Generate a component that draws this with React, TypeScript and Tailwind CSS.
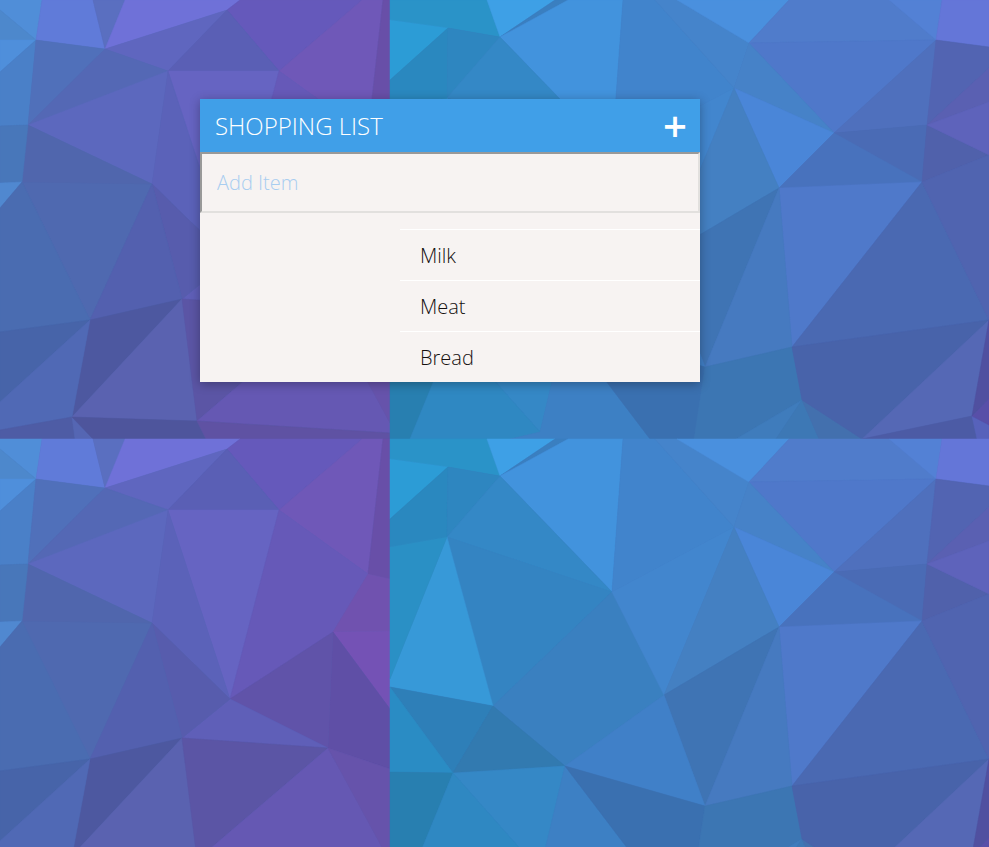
const polys: [string, string][] = [
  // left part of the wallpaper
  ['0,0 42,0 36,40 0,10', '#508ed8'],
  ['0,10 36,40 0,40', '#4d88cc'],
  ['0,40 36,40 0,72', '#4f8fdb'],
  ['0,72 36,40 28,125 0,126', '#4a80c8'],
  ['42,0 93,0 105,49 36,40', '#607bd9'],
  ['93,0 125,0 105,49', '#5a6fc0'],
  ['125,0 240,0 227,10 105,49', '#6f71d8'],
  ['227,10 240,0 362,0 279,71', '#6559bb'],
  ['279,71 362,0 383,0 368,135', '#6f58b8'],
  ['383,0 390,0 390,140 368,135', '#684fa8'],
  ['105,49 227,10 168,71', '#5f66bf'],
  ['227,10 279,71 168,71', '#5a5fb5'],
  ['36,40 105,49 28,125', '#5070ba'],
  ['105,49 168,71 28,125', '#5468b5'],
  ['28,125 168,71 152,184', '#5c68be'],
  ['168,71 279,71 230,260', '#6664c2'],
  ['168,71 230,260 152,184', '#5b62b9'],
  ['279,71 368,135 333,193 230,260', '#6659b8'],
  ['368,135 390,140 390,192 333,193', '#7052af'],
  ['333,193 390,192 390,270', '#7452b5'],
  ['333,193 390,270 390,330 328,309', '#5f4fa6'],
  ['230,260 333,193 328,309', '#6053a9'],
  ['230,260 328,309 182,299', '#5f5fb8'],
  ['152,184 230,260 182,299', '#575cad'],
  ['22,182 152,184 90,320', '#4f69b0'],
  ['152,184 182,299 90,320', '#5360af'],
  ['28,125 152,184 22,182', '#5066ad'],
  ['0,126 28,125 22,182 0,183', '#4877ba'],
  ['0,183 22,182 0,208', '#5088d0'],
  ['0,208 22,182 90,320 0,332', '#4a6cb1'],
  ['0,332 90,320 0,402', '#4764a9'],
  ['90,320 182,299 72,417', '#4d58a0'],
  ['72,417 182,299 197,421', '#5a62b0'],
  ['182,299 328,309 197,421', '#5b55a5'],
  ['197,421 328,309 390,423 390,433', '#6558b3'],
  ['328,309 390,330 390,423', '#6653ab'],
  ['0,402 90,320 72,417 0,430', '#5069b5'],
  ['0,430 72,417 75,439 0,439', '#4e5ca5'],
  ['72,417 93,439 75,439', '#5566b3'],
  ['72,417 197,421 206,439 93,439', '#4e559c'],
  ['197,421 390,433 390,439 206,439', '#5f52a3'],
  // right part
  ['390,0 487,0 500,37 448,28 390,20', '#2a93c8'],
  ['487,0 555,0 500,37', '#3ea0e6'],
  ['555,0 568,0 500,37', '#3a7fc0'],
  ['568,0 623,0 612,153 500,37', '#4293dd'],
  ['390,20 448,28 390,80', '#2c9cd6'],
  ['390,80 448,28 447,98 390,108', '#2a88bf'],
  ['448,28 500,37 447,98', '#2e86c0'],
  ['447,98 500,37 612,153', '#3488c6'],
  ['447,98 612,153 493,267', '#3484c2'],
  ['612,153 664,256 565,327 493,267', '#3a80c0'],
  ['447,98 493,267 390,248 390,240', '#3799d8'],
  ['390,108 447,98 390,240', '#2a90c5'],
  ['390,248 493,267 453,334', '#2e7fb8'],
  ['493,267 565,327 453,334', '#327ab0'],
  ['390,248 453,334 390,333', '#2a8cc4'],
  ['390,333 453,334 410,439 390,439', '#287fb0'],
  ['453,334 565,327 540,432', '#3588c6'],
  ['453,334 540,432 510,439 410,439', '#2f88c2'],
  ['565,327 650,439 510,439 540,432', '#3d80c4'],
  ['623,0 655,0 734,88 612,153', '#4184cc'],
  ['612,153 734,88 664,256', '#4286ce'],
  ['655,0 677,0 749,43 734,88', '#4584cb'],
  ['677,0 789,0 749,43', '#4a90de'],
  ['749,43 789,0 889,0 936,40', '#507ccb'],
  ['889,0 942,0 936,40', '#5381d5'],
  ['942,0 989,0 989,47 936,40', '#6476d8'],
  ['749,43 936,40 834,133', '#4f78ca'],
  ['734,88 749,43 834,133', '#4682c8'],
  ['734,88 834,133 779,188', '#4a86d8'],
  ['834,133 936,40 927,125', '#4f70bd'],
  ['834,133 927,125 922,182', '#4a6bb5'],
  ['779,188 834,133 922,182', '#4872bd'],
  ['779,188 922,182 792,347', '#4f79ca'],
  ['922,182 989,320 792,347', '#4a69b2'],
  ['927,125 922,182 989,155', '#5061ab'],
  ['936,40 989,47 989,68 927,125', '#5264b2'],
  ['927,125 989,68 989,102', '#5a60b2'],
  ['927,125 989,102 989,155', '#5e63bb'],
  ['922,182 989,155 989,320', '#5064b0'],
  ['734,88 779,188 664,256', '#4480c2'],
  ['664,256 779,188 705,367', '#3f74b4'],
  ['779,188 792,347 705,367', '#467ac0'],
  ['565,327 664,256 705,367', '#4080c8'],
  ['565,327 705,367 694,439 650,439', '#3a70b0'],
  ['705,367 792,347 802,400 736,439 694,439', '#3c76b3'],
  ['802,400 776,439 736,439', '#3f7cbc'],
  ['802,400 819,439 776,439', '#3d78b5'],
  ['802,400 862,439 819,439', '#4370ae'],
  ['792,347 989,320 862,439 802,400', '#4863aa'],
  ['862,439 989,320 972,416', '#5568b5'],
  ['862,439 972,416 977,439', '#4c5ba5'],
  ['972,416 977,439 989,439 989,425', '#5762bb'],
  ['972,416 989,398 989,425', '#584fa8'],
  ['972,416 989,320 989,398', '#5050a0'],
]

function Wallpaper() {
  return (
    <svg className="absolute inset-0" width="989" height="847" viewBox="0 0 989 847">
      <defs>
        <g id="tile">
          {polys.map(([points, fill]) => (
            <polygon key={points} points={points} fill={fill} stroke={fill} strokeWidth="0.5" />
          ))}
        </g>
      </defs>
      <use href="#tile" />
      <use href="#tile" y="439" />
    </svg>
  )
}

export default function App() {
  const items = ['Milk', 'Meat', 'Bread']

  return (
    <div className="relative h-[847px] overflow-hidden bg-[#4a6cb1] font-['Open_Sans',sans-serif]">
      <Wallpaper />

      <div className="relative ml-[200px] pt-[99px] w-[500px]">
        <div className="bg-[#f7f3f2] shadow-[0_2px_10px_rgba(0,0,0,0.3)]">
          {/* Header */}
          <div className="h-[53px] bg-[#409fe8] pl-[15px] pr-[13px] flex items-center justify-between">
            <h1 className="text-2xl font-light text-white">SHOPPING LIST</h1>
            <span className="text-[42px] leading-none font-semibold text-white">+</span>
          </div>

          {/* Input */}
          <input
            placeholder="Add Item"
            className="block w-full h-[61px] pl-[15px] bg-[#f7f3f2] text-xl font-light border-2 border-t-[#999999] border-l-[#999999] border-r-[#e2e0de] border-b-[#e2e0de] outline-none placeholder:text-[#a8cdf0]"
          />

          {/* List */}
          <ul className="pt-4 pl-[200px]">
            {items.map((item) => (
              <li key={item} className="h-[51px] border-t border-white pl-5 pt-[2px] flex items-center text-xl font-light text-[#14100f]">
                {item}
              </li>
            ))}
          </ul>
        </div>
      </div>
    </div>
  )
}
